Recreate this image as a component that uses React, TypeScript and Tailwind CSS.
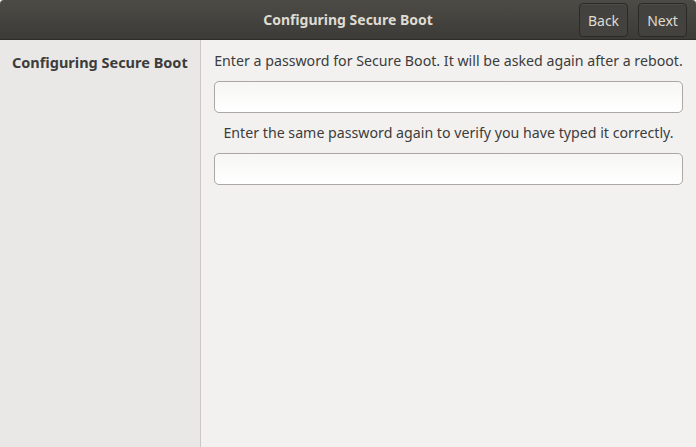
import React from "react";

export default function App() {
  return (
    <div
      className="w-[696px] h-[447px] flex flex-col bg-[#f2f1f0] overflow-hidden"
      style={{ fontFamily: '"Noto Sans", "DejaVu Sans", sans-serif' }}
    >
      <header className="relative h-[40px] shrink-0 rounded-t-[4px] bg-gradient-to-b from-[#4d4b46] to-[#3c3b37] border-b border-[#2d2c29] flex items-center justify-center">
        <h1 className="text-[14px] font-bold text-[#dfdbd2]">Configuring Secure Boot</h1>
        <div className="absolute right-[9px] top-[3px] flex gap-[10px]">
          <button className="h-[34px] w-[49px] rounded-[4px] border border-[#2b2a27] bg-[#44423e] text-[14px] text-[#dfdbd2] shadow-[inset_0_1px_0_rgba(255,255,255,0.06)]">
            Back
          </button>
          <button className="h-[34px] w-[49px] rounded-[4px] border border-[#2b2a27] bg-[#44423e] text-[14px] text-[#dfdbd2] shadow-[inset_0_1px_0_rgba(255,255,255,0.06)]">
            Next
          </button>
        </div>
      </header>
      <div className="flex flex-1">
        <aside className="w-[201px] shrink-0 bg-[#e9e8e6] border-r border-[#cbc8c4] pt-[12px] pl-[12px]">
          <div className="text-[14.5px] font-bold text-[#3c3c3c]">Configuring Secure Boot</div>
        </aside>
        <main className="flex-1 flex flex-col px-[13px] pt-[11px] text-[#3c3c3c]">
          <p className="text-[14.2px] text-center leading-[20px] whitespace-nowrap">
            Enter a password for Secure Boot. It will be asked again after a reboot.
          </p>
          <input
            type="password"
            className="mt-[10px] h-[32px] w-full rounded-[5px] border border-[#aba8a3] bg-gradient-to-b from-[#f6f6f5] to-[#ffffff] outline-none"
          />
          <p className="mt-[10px] text-[14.2px] text-center leading-[20px] whitespace-nowrap">
            Enter the same password again to verify you have typed it correctly.
          </p>
          <input
            type="password"
            className="mt-[10px] h-[32px] w-full rounded-[5px] border border-[#aba8a3] bg-gradient-to-b from-[#f6f6f5] to-[#ffffff] outline-none"
          />
        </main>
      </div>
    </div>
  );
}
